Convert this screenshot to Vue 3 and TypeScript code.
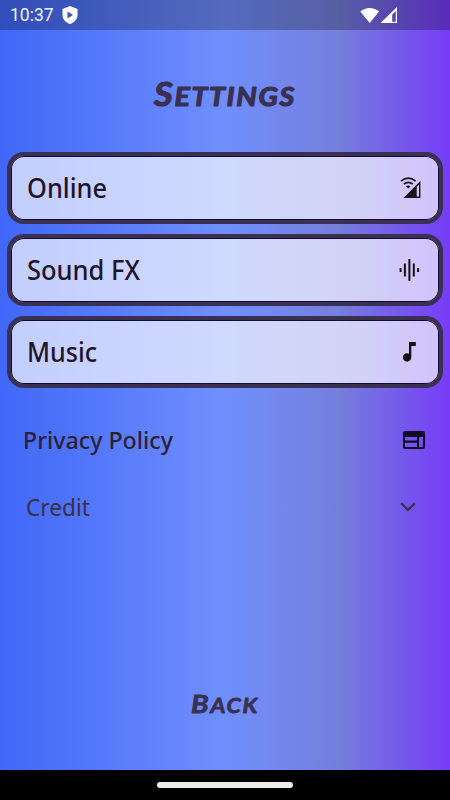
<script setup lang="ts">
interface Setting {
  label: string
  width: number
  icon: 'network' | 'wave' | 'note'
}

const settings: Setting[] = [
  { label: 'Online', width: 80, icon: 'network' },
  { label: 'Sound FX', width: 113, icon: 'wave' },
  { label: 'Music', width: 70, icon: 'note' },
]
</script>

<template>
  <div class="screen">
    <header class="status">
      <span class="clock">10:37</span>
      <svg class="shield" viewBox="0 0 16 18">
        <path d="M8 0 15.500 3v6c0 4.200-3.200 7.600-7.500 9C3.700 16.600.5 13.200.5 9V3Z" fill="#fff" />
        <path d="M5.500 5.500v7l5.500-3.500Z" fill="#3455bd" />
      </svg>
      <svg class="signals" viewBox="0 0 38 18">
        <path d="M.3 4.500C5.500-.3 13.700-.3 19 4.500L9.700 16Z" fill="#fff" />
        <path fill-rule="evenodd" d="M37 0v16H20.500ZM35.800 4v10.800h-3.600V7.600Z" fill="#fff" />
      </svg>
    </header>

    <main class="content">
      <svg class="title" viewBox="0 0 150 40" role="heading">
        <text x="4" y="28" textLength="142" lengthAdjust="spacingAndGlyphs" class="marker"><tspan class="cap">S</tspan><tspan class="small">ETTINGS</tspan></text>
      </svg>

      <section class="cards">
        <button v-for="item in settings" :key="item.label" class="card">
          <svg class="label" width="150" height="40">
            <text x="0" y="30" :textLength="item.width" lengthAdjust="spacingAndGlyphs">{{ item.label }}</text>
          </svg>
          <svg v-if="item.icon === 'network'" class="icon" viewBox="0 0 24 24">
            <path d="M22.400 5v17H5.500ZM21 8.800l-2.300 2.300v9.500H21Z" fill="#15131b" fill-rule="evenodd" />
            <path d="M3 5.200q7.300-6 14.600 0M5.800 8.200q4.500-3.700 9 0" fill="none" stroke="#15131b" stroke-width="1.600" />
            <path d="M8 10.300q2.300-1.800 4.600 0l-2.300 2.300Z" fill="#15131b" />
          </svg>
          <svg v-else-if="item.icon === 'wave'" class="icon" viewBox="0 0 24 24">
            <path d="M2.600 10v4M6.900 5.500v13M11.400 1v22M15.800 5.500v13M20.100 10v4" fill="none" stroke="#151018" stroke-width="2" />
          </svg>
          <svg v-else class="icon" viewBox="0 0 24 24">
            <path d="M11 2h6.800v4h-4.500v11.300a4.200 4.200 0 1 1-2.300-3.600Z" fill="#151018" />
          </svg>
        </button>
      </section>

      <div class="row policy">
        <svg class="label" width="170" height="36">
          <text x="0" y="27" textLength="150" lengthAdjust="spacingAndGlyphs">Privacy Policy</text>
        </svg>
        <svg class="web" viewBox="0 0 22 18">
          <path fill-rule="evenodd" d="M2 0h18q2 0 2 2v14q0 2-2 2H2q-2 0-2-2V2Q0 0 2 0ZM2 6v3.600h12V6ZM2 11.800V16h12v-4.200ZM16 6v10h4V6Z" fill="#100b20" />
        </svg>
      </div>

      <div class="row credit">
        <svg class="label" width="150" height="36">
          <text x="-1" y="27" textLength="64" lengthAdjust="spacingAndGlyphs">Credit</text>
        </svg>
        <svg class="chevron" viewBox="0 0 16 10">
          <path d="m1.200 1.200 6.800 6.800 6.800-6.800" fill="none" stroke="#393047" stroke-width="2.200" />
        </svg>
      </div>

      <svg class="back" viewBox="0 0 80 30" role="button">
        <text x="4" y="22" textLength="68" lengthAdjust="spacingAndGlyphs" class="marker"><tspan class="cap">B</tspan><tspan class="small">ACK</tspan></text>
      </svg>
    </main>

    <footer class="nav"><span class="handle"></span></footer>
  </div>
</template>

<style>
body {
  margin: 0;
}
</style>

<style scoped>
.screen {
  width: 450px;
  height: 800px;
  display: flex;
  flex-direction: column;
  overflow: hidden;
  background: linear-gradient(90deg, #4067f8 0%, #708ffd 50%, #757fdc 75%, #763cf7 100%);
  font-family: "Noto Sans", sans-serif;
}
svg {
  display: block;
  flex: none;
  overflow: visible;
}
.status {
  height: 30px;
  flex: none;
  display: flex;
  align-items: center;
  box-sizing: border-box;
  padding: 0 52px 0 10px;
  background: rgba(0, 0, 0, 0.25);
}
.clock {
  width: 45px;
  color: #eef1ff;
  font: 17.5px/32px Roboto, sans-serif;
}
.shield {
  width: 16px;
  height: 18px;
  margin-left: 7px;
}
.signals {
  width: 38px;
  height: 18px;
  margin: 1px 0 0 auto;
}
.content {
  flex: 1;
  display: flex;
  flex-direction: column;
}
.title {
  width: 150px;
  height: 40px;
  margin: 48px 0 0 150px;
}
.marker {
  font-family: Lato, sans-serif;
  font-weight: 700;
  font-style: italic;
  letter-spacing: 1.5px;
  fill: #393052;
  stroke: #393052;
  stroke-width: 1.2;
  stroke-linejoin: round;
}
.title .cap {
  font-size: 33px;
}
.title .small {
  font-size: 26px;
}
.cards {
  display: flex;
  flex-direction: column;
  gap: 10px;
  padding: 34px 7px 0;
}
.card {
  height: 72px;
  box-sizing: border-box;
  display: flex;
  align-items: center;
  justify-content: space-between;
  padding: 0 17px 0 16px;
  border: 4px solid #393052;
  border-radius: 17px;
  background: rgba(250, 250, 255, 0.7);
  background-clip: padding-box;
  box-shadow: inset 0 0 0 1px #110b35;
}
.label text {
  font-family: "Noto Sans", sans-serif;
  font-size: 27px;
  font-weight: 500;
  fill: #21142b;
}
.icon {
  width: 24px;
  height: 24px;
}
.row {
  display: flex;
  align-items: center;
  justify-content: space-between;
  height: 36px;
}
.policy {
  margin-top: 34px;
  padding: 0 25px 0 23px;
}
.policy .label text {
  font-size: 24px;
  fill: #2c2036;
}
.web {
  width: 22px;
  height: 18px;
}
.credit {
  margin-top: 31px;
  padding: 0 34px 0 27px;
}
.credit .label text {
  font-size: 24px;
  font-weight: 400;
  fill: #393047;
}
.chevron {
  width: 16px;
  height: 10px;
}
.back {
  width: 80px;
  height: 30px;
  margin: 166px 0 0 187px;
}
.back .marker {
  stroke-width: 0.8;
}
.back .cap {
  font-size: 25px;
}
.back .small {
  font-size: 20px;
}
.nav {
  height: 30px;
  flex: none;
  display: flex;
  justify-content: center;
  align-items: center;
  background: #000;
}
.handle {
  width: 136px;
  height: 6px;
  border-radius: 3px;
  background: #ececec;
}
</style>
